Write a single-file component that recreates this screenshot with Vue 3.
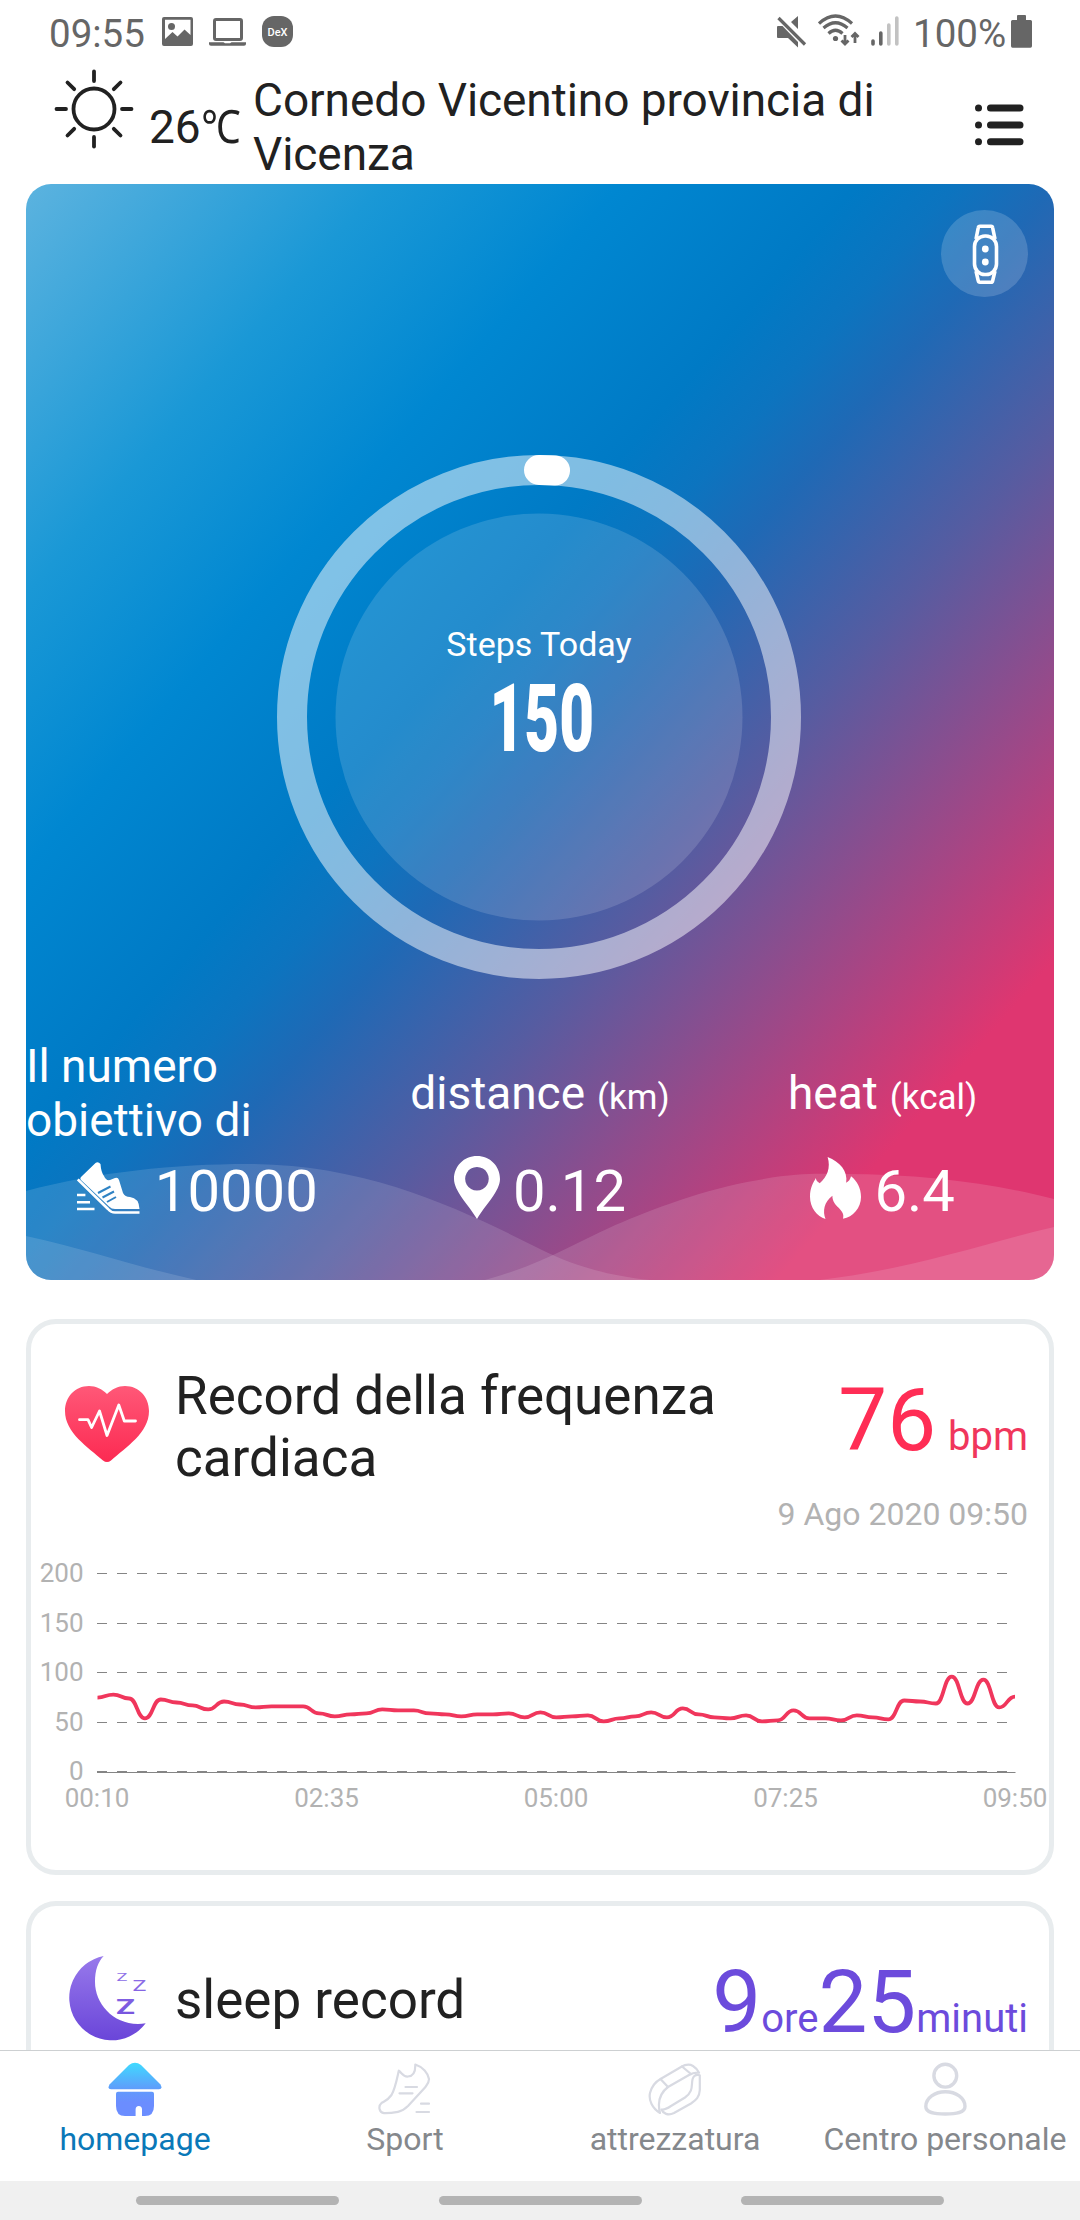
<script setup>
import { computed } from 'vue'

const GOAL = 10000
const steps = 150

const tabs = [
  { id: 'home', label: 'homepage', active: true },
  { id: 'sport', label: 'Sport' },
  { id: 'band', label: 'attrezzatura' },
  { id: 'user', label: 'Centro personale' }
]

// one sample every 10 minutes, 00:10 - 09:50
const bpm = [
  75, 78, 74, 54, 73, 70, 67, 63, 71, 68, 65, 66, 66, 66, 59, 56, 58, 59, 63, 62,
  62, 59, 58, 56, 58, 58, 59, 55, 60, 55, 56, 57, 51, 54, 56, 60, 55, 64, 58, 55,
  54, 57, 51, 52, 62, 54, 54, 52, 57, 55, 53, 72, 71, 69, 96, 69, 93, 65, 76
]
const times = ['00:10', '02:35', '05:00', '07:25', '09:50']

const rows = [
  { value: 200, y: 23.5 },
  { value: 150, y: 73.5 },
  { value: 100, y: 122.5 },
  { value: 50, y: 172.5 },
  { value: 0, y: 221.5 }
]

const line = computed(() => {
  const dx = 917.5 / (bpm.length - 1)
  const pts = bpm.map((v, i) => [66.5 + i * dx, 222 - v * 0.993])
  return pts.reduce((d, [x, y], i) => {
    if (i === 0) return `M${x} ${y}`
    const [px, py] = pts[i - 1]
    const mid = (px + x) / 2
    return `${d} C${mid} ${py} ${mid} ${y} ${x} ${y}`
  }, '')
})
</script>


<template>
  <div class="screen">
    <div class="status">
      <span class="clock">09:55</span>
      <svg class="s-image" width="31" height="29" viewBox="0 0 31 29">
        <path fill-rule="evenodd" d="M2 0H29Q31 0 31 2V27Q31 29 29 29H2Q0 29 0 27V2Q0 0 2 0ZM3 2.700V22L10.500 15L15.500 19.500L22.500 12.500L28.500 18V2.700Z" />
        <circle cx="9.500" cy="9.500" r="3.500" />
      </svg>
      <svg class="s-laptop" width="37" height="28" viewBox="0 0 37 28">
        <rect x="5.500" y="1.500" width="27" height="20" rx="1.500" fill="none" stroke="#666" stroke-width="3" />
        <path d="M0 24.300H14.500L16 25.300H21L22.500 24.300H37V26Q37 27.700 35 27.700H2Q0 27.700 0 26Z" />
      </svg>
      <svg class="s-dex" width="31" height="31" viewBox="0 0 31 31">
        <rect width="31" height="31" rx="12" />
        <text x="15.500" y="19.500" text-anchor="middle" fill="#fff" font-size="11" font-weight="500" textLength="20">DeX</text>
      </svg>
      <span class="fill"></span>
      <svg class="s-mute" width="30" height="32" viewBox="0 0 30 32">
        <path d="M0 11Q0 10 1 10H5.500L21 26V31.500L11 22H1Q0 22 0 21ZM21 0V13L14 6Z" />
        <path d="M1.500 2L28 28.500" fill="none" stroke="#666" stroke-width="3.200" />
      </svg>
      <svg class="s-wifi" width="42" height="33" viewBox="0 0 42 33">
        <g fill="none" stroke="#666" stroke-width="3.200">
          <path d="M1 9.500Q17.500 -5.500 34 9.500M5.500 14Q17.500 3.500 29.500 14M10.500 19.500Q17.500 13 24.500 19.500" />
          <path d="M27 21V30M23.500 26.500L27 30L30.500 26.500M37 29V19.500M33.500 23L37 19.500L40.500 23" stroke-width="2.800" />
        </g>
        <circle cx="17.500" cy="24.500" r="2.600" />
      </svg>
      <svg class="s-signal" width="28" height="30" viewBox="0 0 28 30">
        <path d="M2 25V28M9.800 17V28" fill="none" stroke="#666" stroke-width="3.600" stroke-linecap="round" />
        <path d="M17.800 9V28M25.800 2V28" fill="none" stroke="#c2c2c2" stroke-width="3.600" stroke-linecap="round" />
      </svg>
      <span class="percent">100%</span>
      <svg class="s-battery" width="21" height="33" viewBox="0 0 21 33">
        <path d="M6 1Q6 0 7 0H14Q15 0 15 1V5H19.500Q21 5 21 6.500V31Q21 32.700 19.500 32.700H1.500Q0 32.700 0 31V6.500Q0 5 1.500 5H6Z" />
      </svg>
    </div>

    <header class="header">
      <svg class="sun" width="80" height="82" viewBox="-40 -41 80 82">
        <g fill="none" stroke="#212121" stroke-width="3.800" stroke-linecap="round">
          <circle r="20.500" />
          <path v-for="a in 8" :key="a" d="M0 -28V-37.500" :transform="`rotate(${a * 45})`" />
        </g>
      </svg>
      <span class="temp">26<span class="unit">℃</span></span>
      <p class="place">Cornedo Vicentino provincia di Vicenza</p>
      <svg class="menu" width="49" height="42" viewBox="0 0 49 42">
        <g v-for="n in 3" :key="n" stroke="#212121" stroke-width="7" stroke-linecap="round">
          <path :d="`M3.500 ${n * 16.900 - 12.900}h.01M15.500 ${n * 16.900 - 12.900}H45`" />
        </g>
      </svg>
    </header>

    <section class="hero">
      <svg class="waves" width="1028" height="120" viewBox="0 0 1028 120">
        <path d="M0 31C70 12 150 4 222 4C345 4 440 52 514 89C550 107 590 119 650 122H775C880 112 955 84 1028 67V120H0Z" />
        <path d="M0 76C60 89 110 107 175 121H455C510 107 550 83 583 68S670 32 721 22S790 14 817 14C900 14 970 24 1028 39V120H0Z" />
      </svg>

      <div class="device">
        <svg width="87" height="87" viewBox="0 0 87 87" fill="none" stroke="#fff" stroke-width="3.600">
          <path d="M35 29L37.200 18Q37.500 16.200 39 16.200H50Q51.500 16.200 51.700 18L54 29M35 61L37.200 70.500Q37.500 72.300 39 72.300H50Q51.500 72.300 51.700 70.500L54 61" />
          <rect x="33.500" y="26" width="22" height="38.500" rx="10.500" />
          <circle cx="44.300" cy="39" r="3.400" fill="#fff" stroke="none" />
          <circle cx="44.300" cy="52" r="3.400" fill="#fff" stroke="none" />
        </svg>
      </div>

      <div class="ring">
        <svg class="ring-art" width="524" height="524" viewBox="-262 -262 524 524">
          <circle r="203.500" fill="#fff" fill-opacity=".14" />
          <circle r="247" fill="none" stroke="#fff" stroke-opacity=".5" stroke-width="30" />
          <path d="M0 -247A247 247 0 0 1 16 -246.500" fill="none" stroke="#fff" stroke-width="30" stroke-linecap="round" />
        </svg>
        <span class="ring-label">Steps Today</span>
        <span class="ring-value">{{ steps }}</span>
      </div>

      <div class="stats">
        <div class="stat">
          <p class="stat-label goal">Il numero<br>obiettivo di</p>
          <p class="stat-value">
            <svg class="shoe" width="63" height="52" viewBox="0 0 63 52">
              <mask id="laces">
                <rect width="63" height="52" fill="#fff" />
                <path d="M21 31L33.500 24.500M25.500 35.500L37 29.500M30 40L39 35" stroke="#000" stroke-width="2" />
              </mask>
              <path mask="url(#laces)" fill="#fff" d="M18.500 1Q21 -1 23.500 2Q24 10 27 14Q29 19 33 18L38 16Q41 15 42 18L46 31Q48 35 53 35Q62 36 62.500 47H38Q34.500 47 32 44.500L4 18Q2.500 16.500 4.500 14.500Z" />
              <path fill="none" stroke="#fff" stroke-width="2.600" d="M.8 17.500L31 47Q34 50.500 38 50.500H62.500M0 33H8.400M0 40.300H13M0 47H17.500" />
            </svg>
            {{ GOAL }}
          </p>
        </div>
        <div class="stat">
          <p class="stat-label">distance <small>(km)</small></p>
          <p class="stat-value">
            <svg class="pin" width="46" height="63" viewBox="0 0 46 63">
              <path fill="#fff" fill-rule="evenodd" d="M23 0C10 0 0 10 0 23C0 35 14 48 23 63C32 48 46 35 46 23C46 10 36 0 23 0ZM23 11A11.800 11.800 0 1 1 22.900 11Z" />
            </svg>
            0.12
          </p>
        </div>
        <div class="stat">
          <p class="stat-label">heat <small>(kcal)</small></p>
          <p class="stat-value">
            <svg class="flame" width="51" height="62" viewBox="0 0 51 62">
              <path fill="#fff" d="M17.600 0C30 5 38 14 36.200 25.700Q40 24 41 19.300C47 24 51 31 51 40C51 51 43 60 33 61.700C36 52 22 50 22.400 38.700C14 45 12.500 54 15.500 62C7 59 0 51 0 39.700C0 31 3 26 5.900 21C6 24 8 25 9.700 26.300C17 20 21 11 17.600 0Z" />
            </svg>
            6.4
          </p>
        </div>
      </div>
    </section>

    <section class="card heart-card">
      <div class="card-head">
        <svg class="heart" width="84" height="77" viewBox="0 0 84 77">
          <linearGradient id="red" x2="0" y2="1">
            <stop stop-color="#ff5878" />
            <stop offset="1" stop-color="#fc2a52" />
          </linearGradient>
          <path fill="url(#red)" d="M42 8C37 3 31 0 24 0C10 0 0 11 0 25C0 47 23 61 38 74.500Q42 77.500 46 74.500C61 61 84 47 84 25C84 11 74 0 60 0C53 0 47 3 42 8Z" />
          <path fill="none" stroke="#fff" stroke-width="2.800" stroke-linecap="round" stroke-linejoin="round" d="M14.500 33.700H23L26.600 41.500L34.500 25L42 49.500L53.800 19L59.300 35H70.500" />
        </svg>
        <h2>Record della frequenza cardiaca</h2>
        <p class="reading"><b>76</b> bpm</p>
      </div>
      <p class="date">9 Ago 2020 09:50</p>
      <svg class="chart" width="1018" height="270" viewBox="0 0 1018 270">
        <g v-for="row in rows" :key="row.value">
          <path class="dash" :d="`M66 ${row.y}H982`" />
          <text x="52.500" :y="row.y + 8" text-anchor="end">{{ row.value }}</text>
        </g>
        <path class="axis" d="M66 222.500H984.500" />
        <text v-for="(t, i) in times" :key="t" :x="66 + i * 229.500" y="257" text-anchor="middle">{{ t }}</text>
        <path class="bpm-line" :d="line" />
      </svg>
    </section>

    <section class="card sleep-card">
      <div class="card-head">
        <svg class="moon" width="84" height="92" viewBox="0 0 84 92" fill="url(#violet)">
          <linearGradient id="violet" x2="0" y2="92" gradientUnits="userSpaceOnUse">
            <stop stop-color="#9a7cec" />
            <stop offset="1" stop-color="#6843d8" />
          </linearGradient>
          <path d="M37.700 4A42.500 42.500 0 1 0 79.700 71.300C50 76 29 53 29 30C29 18 32 10 37.700 4Z" />
          <text x="50.500" y="28.500" font-size="10.500" textLength="11" lengthAdjust="spacingAndGlyphs">Z</text>
          <text x="66.500" y="38.800" font-size="14.500" textLength="14" lengthAdjust="spacingAndGlyphs">Z</text>
          <text x="50" y="62.300" font-size="21" font-weight="700" textLength="19" lengthAdjust="spacingAndGlyphs">Z</text>
        </svg>
        <h2>sleep record</h2>
        <p class="reading"><b>9</b>ore<b>25</b>minuti</p>
      </div>
    </section>

    <nav class="tabs">
      <a v-for="tab in tabs" :key="tab.id" class="tab" :class="{ active: tab.active }">
        <svg width="54" height="54" viewBox="0 0 54 54" fill="none" stroke="#d8dae2" stroke-width="2.200" stroke-linecap="round" stroke-linejoin="round">
          <g v-if="tab.id === 'home'" fill="url(#sky)" stroke="none">
            <linearGradient id="sky" x2="0" y2="54" gradientUnits="userSpaceOnUse">
              <stop stop-color="#3fdcff" />
              <stop offset=".5" stop-color="#5f9cfb" />
              <stop offset=".75" stop-color="#6b8dff" />
            </linearGradient>
            <path d="M21 3Q27 -1.500 33 3L52.500 22.500Q55 27.300 51 27.300H3Q-1 27.300 1.500 22.500Z" />
            <path d="M10 29.700H44Q46 29.700 46 31.700V44Q46 54 37 54H34V47.500Q34 44 30.800 44Q27.600 44 27.600 47.500V54H17Q8 54 8 44V31.700Q8 29.700 10 29.700Z" />
          </g>
          <g v-else-if="tab.id === 'sport'">
            <path d="M37.300 2.500C45 5 50 11 51 17C51.200 21 49 23 47 25.500L30 44C26 48 24 49 20 49.800C14 51 9 51.300 6 51.200C1 50.500 0 44 3.500 41C8 38.500 10 38 13.500 33C17 27 18.500 19 20.800 8.700C24 11 25 15 30 14.500C36 14 37.500 9 37.300 2.500Z" />
            <path d="M27.500 25H39M21.500 31.300H34.500M43 41.700H51M38.500 50H51" />
          </g>
          <g v-else-if="tab.id === 'band'">
            <path d="M12 51C4 46 .5 38 2 31C4 23 8 19.500 12.500 17L33 5Q40 1 45 4Q49 6.500 51 10.700Q46 10 41 13L20 25C12 31 9 39 12 51Z" />
            <path d="M12.500 17L20 25M34 4.500L43 12" />
            <path d="M51.800 13.300V28C51.500 35 48 38 43 41.500L26 51C20 54 15 51.500 13.500 47.500C17 48 20 46 23 44L37 35.500C46 29 43 23 44.600 17C46 13 49 12.500 51.800 13.300Z" />
          </g>
          <g v-else stroke-width="3.400">
            <circle cx="27.300" cy="13.700" r="11.400" />
            <path d="M27.300 29.800C38 29.800 47 36 47 44.500C47 51 38 52 27.300 52C16 52 7.800 51 7.800 44.500C7.800 36 17 29.800 27.300 29.800Z" />
          </g>
        </svg>
        <span>{{ tab.label }}</span>
      </a>
    </nav>

    <div class="gesture">
      <i v-for="n in 3" :key="n"></i>
    </div>
  </div>
</template>


<style>
body {
  background: #fff;
}
</style>

<style scoped>
.screen {
  display: flex;
  flex-direction: column;
  width: 1080px;
  height: 2220px;
  overflow: hidden;
  background: #fff;
  color: #212121;
  font-family: Roboto, "Noto Sans", sans-serif;
}

p, h2 {
  margin: 0;
  font-weight: 400;
}

svg {
  display: block;
  flex: none;
}

/* status bar */
.status {
  display: flex;
  align-items: flex-start;
  flex: none;
  height: 64px;
  box-sizing: border-box;
  padding: 0 48px 0 49px;
  color: #666;
  fill: #666;
  font-size: 38.500px;
  line-height: 44px;
}

.clock, .percent {
  margin-top: 12px;
}

.clock {
  width: 113px;
}

.fill {
  flex: 1;
}

.s-image { margin-top: 17px; }
.s-laptop { margin: 18px 0 0 16px; }
.s-dex { margin: 16px 0 0 16px; }
.s-mute { margin-top: 16px; }
.s-wifi { margin: 14px 0 0 11px; }
.s-signal { margin: 16px 0 0 11px; }
.percent { width: 98px; margin-left: 14px; }
.s-battery { margin: 15px 0 0; }

/* weather header */
.header {
  display: flex;
  align-items: flex-start;
  flex: none;
  height: 120px;
  box-sizing: border-box;
  padding: 0 56px 0 54px;
  font-size: 46px;
  line-height: 54px;
}

.sun {
  margin-top: 4px;
}

.temp {
  width: 104px;
  margin: 36px 0 0 15px;
  white-space: nowrap;
}

.unit {
  display: inline-block;
  transform: scaleX(.86);
  transform-origin: 0 50%;
}

.place {
  width: 660px;
  margin-top: 9px;
  letter-spacing: -.06px;
}

.menu {
  margin: 40px 0 0 auto;
}

/* steps */
.hero {
  position: relative;
  flex: none;
  width: 1028px;
  height: 1096px;
  margin: 0 26px;
  overflow: hidden;
  border-radius: 25px;
  background: linear-gradient(131deg, #5cb3df 0%, #1a98d6 18%, #0087d1 30%, #007ac5 42%, #0c74bf 47%, #1f69b5 52%, #565ca1 62.600%, #df3670 86%);
  color: #fff;
}

.waves {
  position: absolute;
  left: 0;
  bottom: 0;
  fill: rgba(255, 255, 255, .13);
}

.device {
  position: absolute;
  top: 26px;
  right: 26px;
  width: 87px;
  height: 87px;
  border-radius: 50%;
  background: rgba(255, 255, 255, .17);
}

.ring {
  position: relative;
  display: flex;
  flex-direction: column;
  align-items: center;
  width: 524px;
  height: 524px;
  box-sizing: border-box;
  margin: 271px 0 0 251px;
  padding-top: 169px;
}

.ring-art {
  position: absolute;
  inset: 0;
}

.ring-label {
  position: relative;
  font-size: 34px;
  line-height: 40px;
}

.ring-value {
  position: relative;
  left: 3px;
  font-size: 94px;
  font-weight: 900;
  line-height: 110px;
  transform: scaleX(.64);
}

.stats {
  position: relative;
  display: grid;
  grid-template-columns: repeat(3, 1fr);
  margin-top: 60px;
}

.stat-label {
  display: flex;
  align-items: baseline;
  justify-content: center;
  height: 108px;
  box-sizing: border-box;
  padding-top: 27px;
  font-size: 46px;
  line-height: 54px;
}

.stat-label.goal {
  display: block;
  padding-top: 0;
}

.stat-label small {
  margin-left: 12px;
  font-size: 35px;
}

.stat-value {
  display: flex;
  align-items: center;
  justify-content: center;
  height: 68px;
  margin-top: 10px;
  font-size: 58px;
  line-height: 68px;
}

.shoe { margin: 0 15px 6px 0; }
.pin { margin: 0 13px 7px 0; }
.flame { margin: 0 13px 6px 0; }

/* records */
.card {
  flex: none;
  width: 1028px;
  box-sizing: border-box;
  margin: 0 26px;
  border: 5px solid #e8ecee;
  border-radius: 30px;
}

.card-head {
  display: flex;
  align-items: flex-start;
}

.card-head h2 {
  font-size: 53px;
  line-height: 62px;
}

.heart-card {
  height: 556px;
  margin-top: 39px;
  padding-top: 41px;
}

.heart-card h2 {
  width: 580px;
  margin-left: 26px;
}

.heart {
  margin: 21px 0 0 34px;
}

.reading {
  margin: 4px 21px 0 auto;
  color: #f0365c;
  font-size: 40px;
  line-height: 102px;
  white-space: nowrap;
}

.reading b {
  font-size: 87px;
  font-weight: 400;
}

.heart-card .reading b {
  margin-right: 2px;
  color: #ff2d55;
}

.date {
  margin: 6px 21px 0 0;
  color: #b2b2b2;
  font-size: 32px;
  line-height: 38px;
  text-align: right;
}

.chart {
  margin-top: 17px;
  fill: #b2b2b2;
  font-size: 26px;
}

.dash, .axis {
  fill: none;
  stroke: #858585;
  stroke-width: 1;
}

.dash {
  stroke-dasharray: 10 10;
}

.bpm-line {
  fill: none;
  stroke: #f0365c;
  stroke-width: 3.8;
}

.sleep-card {
  height: 149px;
  margin-top: 26px;
  padding-top: 44px;
  border-bottom: 0;
  border-radius: 30px 30px 0 0;
}

.moon {
  margin: 2px 0 0 35px;
}

.sleep-card h2 {
  margin: 19px 0 0 25px;
}

.sleep-card .reading {
  margin-top: 1px;
  color: #6c4bdc;
}

/* bottom navigation */
.tabs {
  position: relative;
  display: grid;
  grid-template-columns: repeat(4, 270px);
  flex: none;
  height: 131px;
  box-sizing: border-box;
  border-top: 1px solid #cdd0d2;
  background: #fff;
}

.tab {
  display: flex;
  flex-direction: column;
  align-items: center;
  padding-top: 11px;
  color: #85888c;
  font-size: 32px;
  line-height: 38px;
  white-space: nowrap;
}

.tab span {
  margin-top: 4px;
}

.tab.active {
  color: #0a78b8;
}

.gesture {
  display: flex;
  justify-content: center;
  gap: 99.500px;
  flex: none;
  height: 39px;
  box-sizing: border-box;
  padding-top: 15px;
  background: #f0f0f0;
}

.gesture i {
  width: 203px;
  height: 9px;
  border-radius: 5px;
  background: #b3b3b3;
}
</style>
